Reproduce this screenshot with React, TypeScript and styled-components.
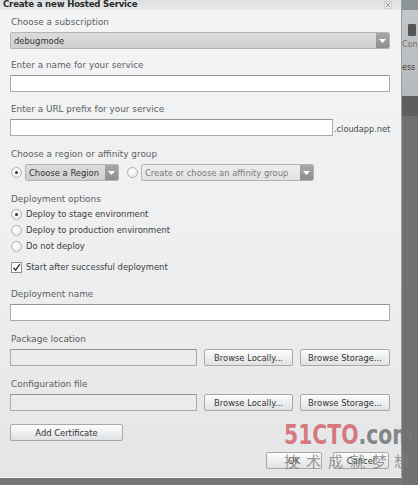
import styled, { createGlobalStyle } from "styled-components";

const Global = createGlobalStyle`
  html, body {
    margin: 0;
    padding: 0;
    background: #767676;
  }
  * {
    box-sizing: border-box;
  }
`;

const ArrowButton = () => (
  <DropButton>
    <svg width="7" height="4" viewBox="0 0 7 4">
      <path d="M0 0 L7 0 L3.5 4 Z" fill="#ffffff" />
    </svg>
  </DropButton>
);

interface SelectProps {
  value: string;
  width: number;
  muted?: boolean;
}

const Select: React.FC<SelectProps> = ({ value, width, muted }) => (
  <SelectBox style={{ width }} $muted={muted}>
    <span>{value}</span>
    <ArrowButton />
  </SelectBox>
);

const Radio: React.FC<{ checked?: boolean }> = ({ checked }) => (
  <RadioDot>{checked && <Dot />}</RadioDot>
);

export default function App() {
  return (
    <>
      <Global />
      <Page>
        <Dialog>
          <TitleBar>
            <h1>Create a new Hosted Service</h1>
            <svg width="8" height="8" viewBox="0 0 8 8">
              <rect x="0.5" y="0.5" width="7" height="7" fill="none" stroke="#b8b8b8" strokeDasharray="1 1" />
              <path d="M2 2 L6 6 M6 2 L2 6" stroke="#a0a0a0" strokeWidth="1" />
            </svg>
          </TitleBar>
          <Body>
            <Label $top={6}>Choose a subscription</Label>
            <Select value="debugmode" width={380} />

            <Label $top={10}>Enter a name for your service</Label>
            <TextInput />

            <Label $top={11}>Enter a URL prefix for your service</Label>
            <Row>
              <TextInput style={{ width: 323 }} />
              <Suffix>.cloudapp.net</Suffix>
            </Row>

            <Label $top={12}>Choose a region or affinity group</Label>
            <Row $gap={3}>
              <Radio checked />
              <Select value="Choose a Region" width={94} />
              <Spacer />
              <Radio />
              <Select value="Create or choose an affinity group" width={173} muted />
            </Row>

            <Label $top={12}>Deployment options</Label>
            <OptionList>
              <Option>
                <Radio checked />
                <span>Deploy to stage environment</span>
              </Option>
              <Option>
                <Radio />
                <span>Deploy to production environment</span>
              </Option>
              <Option>
                <Radio />
                <span>Do not deploy</span>
              </Option>
            </OptionList>
            <Option style={{ marginTop: 5 }}>
              <CheckBox>
                <svg width="9" height="9" viewBox="0 0 9 9">
                  <path d="M1.5 4.8 L3.6 7.2 L7.8 1.2" stroke="#333" strokeWidth="1.4" fill="none" />
                </svg>
              </CheckBox>
              <span>Start after successful deployment</span>
            </Option>

            <Label $top={13}>Deployment name</Label>
            <TextInput />

            <Label $top={12}>Package location</Label>
            <Row $gap={7}>
              <TextInput $disabled style={{ width: 187 }} />
              <Button style={{ width: 89 }}>Browse Locally...</Button>
              <Button style={{ width: 90 }}>Browse Storage...</Button>
            </Row>

            <Label $top={12}>Configuration file</Label>
            <Row $gap={7}>
              <TextInput $disabled style={{ width: 187 }} />
              <Button style={{ width: 89 }}>Browse Locally...</Button>
              <Button style={{ width: 90 }}>Browse Storage...</Button>
            </Row>

            <Button style={{ width: 113, marginTop: 13 }}>Add Certificate</Button>

            <Footer>
              <Button style={{ width: 56 }}>OK</Button>
              <Button style={{ width: 56 }}>Cancel</Button>
            </Footer>
          </Body>
        </Dialog>
        <Backdrop>
          <TopTab />
          <Tile>
            <TileIcon />
            <span>Con</span>
            <span className="low">ess</span>
          </Tile>
          <DarkBand />
        </Backdrop>
        <Watermark>
          <Brand>
            <b>51CTO</b>
            <i>.com</i>
          </Brand>
          <Slogan>技术成就梦想</Slogan>
        </Watermark>
      </Page>
    </>
  );
}

const Page = styled.div`
  position: relative;
  display: flex;
  width: 418px;
  height: 485px;
  overflow: hidden;
  background: #767676;
  font-family: "DejaVu Sans", Verdana, sans-serif;
`;

const Dialog = styled.div`
  width: 402px;
  height: 478px;
  flex-shrink: 0;
  display: flex;
  flex-direction: column;
  background: linear-gradient(#f3f4f6, #eceef0 60%, #e3e5e7);
  border-right: 1px solid #9c9fa1;
  border-bottom: 1px solid #fafafa;
`;

const TitleBar = styled.div`
  height: 10px;
  display: flex;
  align-items: center;
  justify-content: space-between;
  padding: 0 9px 0 3px;
  background: linear-gradient(#dcdee0, #e8eaec);
  overflow: hidden;

  h1 {
    margin: -3px 0 0;
    font-size: 8.6px;
    font-weight: 700;
    color: #2a2a2a;
    font-family: "DejaVu Sans", Verdana, sans-serif;
    letter-spacing: -0.2px;
  }
`;

const Body = styled.div`
  flex: 1;
  display: flex;
  flex-direction: column;
  align-items: flex-start;
  padding: 0 11px 0 10px;
`;

const Label = styled.div<{ $top: number }>`
  margin-top: ${(p) => p.$top}px;
  margin-bottom: 4px;
  padding-left: 1px;
  height: 12px;
  line-height: 12px;
  font-size: 8.9px;
  color: #606060;
  white-space: nowrap;
`;

const SelectBox = styled.div<{ $muted?: boolean }>`
  height: 17px;
  display: flex;
  align-items: center;
  justify-content: space-between;
  padding: 0 0 0 3px;
  border: 1px solid #b4b4b4;
  border-radius: 2px;
  background: ${(p) =>
    p.$muted ? "linear-gradient(#eeeeee, #e2e2e2)" : "linear-gradient(#dcdcdc, #cfcfcf)"};
  font-size: 8.4px;
  color: ${(p) => (p.$muted ? "#7a7a7a" : "#333333")};
  white-space: nowrap;
  overflow: hidden;
`;

const DropButton = styled.div`
  width: 13px;
  height: 15px;
  flex-shrink: 0;
  display: flex;
  align-items: center;
  justify-content: center;
  background: linear-gradient(#a8a8a8, #8e8e8e);
  border-radius: 0 1px 1px 0;
`;

const TextInput = styled.div<{ $disabled?: boolean }>`
  width: 380px;
  height: 17px;
  border: 1px solid #a9aaab;
  border-top-color: #949596;
  background: ${(p) => (p.$disabled ? "#eaebec" : "#ffffff")};
`;

const Row = styled.div<{ $gap?: number }>`
  display: flex;
  align-items: center;
  gap: ${(p) => p.$gap ?? 1}px;
`;

const Suffix = styled.span`
  font-size: 8.2px;
  color: #4a4a4a;
  margin-top: 2px;
`;

const Spacer = styled.div`
  width: 1px;
`;

const RadioDot = styled.div`
  width: 11px;
  height: 11px;
  flex-shrink: 0;
  border-radius: 50%;
  border: 1px solid #b0b2b4;
  background: radial-gradient(circle at 40% 35%, #ffffff, #e4e6e8);
  display: flex;
  align-items: center;
  justify-content: center;
  margin-left: 1px;
`;

const Dot = styled.div`
  width: 3px;
  height: 3px;
  border-radius: 50%;
  background: #333;
`;

const OptionList = styled.div`
  display: flex;
  flex-direction: column;
  margin-top: -3px;
`;

const Option = styled.div`
  height: 16px;
  display: flex;
  align-items: center;
  gap: 4px;
  font-size: 8.4px;
  color: #3c3c3c;
  white-space: nowrap;
`;

const CheckBox = styled.div`
  width: 11px;
  height: 11px;
  margin-left: 1px;
  border: 1px solid #8a8c8e;
  background: #ffffff;
  display: flex;
  align-items: center;
  justify-content: center;
`;

const Button = styled.div`
  height: 17px;
  display: flex;
  align-items: center;
  justify-content: center;
  border: 1px solid #a6a8aa;
  border-radius: 2px;
  background: linear-gradient(#fdfdfd, #eceeef 55%, #dfe1e3);
  font-size: 8.4px;
  color: #333333;
  white-space: nowrap;
  flex-shrink: 0;
`;

const Footer = styled.div`
  align-self: flex-end;
  display: flex;
  gap: 11px;
  margin-top: 11px;
  margin-right: 1px;
`;

const Watermark = styled.div`
  position: absolute;
  left: 284px;
  top: 421px;
  width: 134px;
  display: flex;
  flex-direction: column;
  align-items: flex-start;
  pointer-events: none;
`;

const Brand = styled.div`
  font-family: "DejaVu Sans Condensed", "DejaVu Sans", sans-serif;
  font-weight: 700;
  font-size: 26px;
  line-height: 29px;
  transform: scale(0.87, 1);
  transform-origin: left;
  white-space: nowrap;

  b {
    color: rgba(212, 100, 108, 0.85);
  }
  i {
    font-style: normal;
    color: rgba(118, 118, 118, 0.88);
  }
`;

const Slogan = styled.div`
  margin-top: 2px;
  font-family: "Noto Sans CJK SC", sans-serif;
  font-size: 15px;
  line-height: 18px;
  letter-spacing: 7px;
  color: rgba(128, 128, 128, 0.8);
  white-space: nowrap;
`;

const Backdrop = styled.div`
  flex: 1;
  display: flex;
  flex-direction: column;
  background: repeating-linear-gradient(90deg, #727272 0 3px, #6c6c6c 3px 4px);
`;

const TopTab = styled.div`
  height: 10px;
  background: #8a9398;
`;

const Tile = styled.div`
  height: 86px;
  background: linear-gradient(#c4c7c9, #b6b9bb);
  display: flex;
  flex-direction: column;
  font-family: "DejaVu Sans", sans-serif;
  font-size: 8px;
  color: #6e6e6e;
  overflow: hidden;

  span {
    margin-top: 4px;
  }
  .low {
    margin-top: 14px;
    color: #3a3a3a;
  }
`;

const TileIcon = styled.div`
  width: 8px;
  height: 12px;
  margin: 14px 0 0 6px;
  background: #555;
  border-radius: 1px;
`;

const DarkBand = styled.div`
  height: 20px;
  background: #5e5e5e;
`;
